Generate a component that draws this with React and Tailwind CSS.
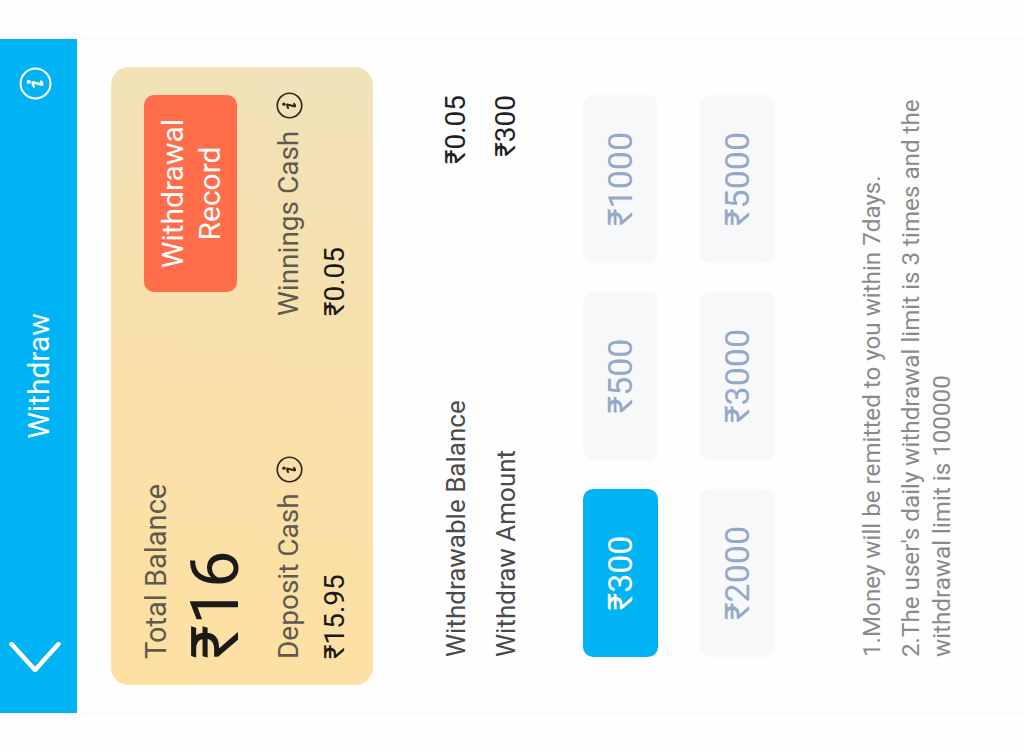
const Info = ({ size, color, sw = 2 }) => (
  <svg width={size} height={size} viewBox="0 0 32 32" fill="none" className="shrink-0">
    <circle cx="16" cy="16" r="14.5" stroke={color} strokeWidth={sw} />
    <circle cx="17.6" cy="9.4" r="2" fill={color} />
    <path d="M13 14.4c1.2-.9 2.4-1.3 4.2-1.2L15 21.6c-.3 1.2.4 1.6 2.9-.1" stroke={color} strokeWidth="2.4" strokeLinecap="round" strokeLinejoin="round" />
  </svg>
);

const amounts = ["₹300", "₹500", "₹1000", "₹2000", "₹3000", "₹5000"];

export default function App() {
  return (
    <div className="w-[1024px] h-[752px] overflow-hidden bg-[#fefefe] font-['Roboto',sans-serif]">
      <div className="w-[752px] h-[1024px] origin-top-left [transform:translateY(752px)_rotate(-90deg)] px-[38px]">
        <div className="h-full border-x border-[#f5f5f5] flex flex-col">
          <header className="h-[77px] shrink-0 bg-[#00b3f4] grid grid-cols-[1fr_auto_1fr] items-center text-white">
            <div className="pl-[41px] pb-[7px] flex">
              <svg width="30" height="52" viewBox="0 0 30 52" fill="none">
                <path d="M28 2.5 2 26l26 23.5" stroke="#fff" strokeWidth="4.5" strokeLinecap="round" strokeLinejoin="round" />
              </svg>
            </div>
            <h1 className="text-[30px] leading-none font-normal">Withdraw</h1>
            <div className="flex justify-end pr-[28px] pb-[6px]">
              <Info size={33} color="#fff" />
            </div>
          </header>

          <main className="px-[28px] pt-[34px]">
            <section className="h-[262px] rounded-[18px] bg-linear-100 from-[#fde0a2] via-[#f9e0aa] to-[#f0e2ba] pl-[26px] pr-[28px] pt-[33px] flex flex-col">
              <div className="flex justify-between h-[93px]">
                <div>
                  <div className="text-[29px] leading-[25px] text-[#5f5a4e]">Total Balance</div>
                  <div className="text-[66px] leading-[68px] mt-[13px] text-[#1c1a16]">₹16</div>
                </div>
                <button className="w-[197px] h-[93px] rounded-[10px] bg-[#ff6d4a] text-white text-[30px] leading-[37px]">
                  Withdrawal
                  <br />
                  Record
                </button>
              </div>
              <div className="grid grid-cols-[343px_1fr] mt-[36px]">
                <div>
                  <div className="flex items-center gap-[10px] h-[32px] text-[28px] whitespace-nowrap text-[#5f5a4e]">
                    Deposit Cash <Info size={27} color="#2a2823" />
                  </div>
                  <div className="text-[28px] leading-[32px] mt-[14px] text-[#1c1a16]">₹15.95</div>
                </div>
                <div>
                  <div className="flex items-center gap-[12px] h-[32px] text-[28px] whitespace-nowrap text-[#5f5a4e]">
                    Winnings Cash <Info size={27} color="#2a2823" />
                  </div>
                  <div className="text-[28px] leading-[32px] mt-[14px] text-[#1c1a16]">₹0.05</div>
                </div>
              </div>
            </section>

            <div className="px-[28px]">
              <div className="mt-[58px] text-[26px] leading-[50px] text-[#4a4a4a]">
                <div className="flex justify-between">
                  <span>Withdrawable Balance</span>
                  <span className="text-[#222] text-[28px]">₹0.05</span>
                </div>
                <div className="flex justify-between">
                  <span>Withdraw Amount</span>
                  <span className="text-[#222] text-[28px]">₹300</span>
                </div>
              </div>

              <div className="mt-[52px] grid grid-cols-3 gap-x-[29px] gap-y-[42px]">
                {amounts.map((a, i) => (
                  <button
                    key={a}
                    className={
                      i === 0
                        ? "h-[75px] rounded-[10px] bg-[#00b3f4] text-white text-[34px]"
                        : "h-[75px] rounded-[10px] bg-[#f7f8fa] text-[#94a8c8] text-[34px]"
                    }
                  >
                    {a}
                  </button>
                ))}
              </div>

              <div className="mt-[82px] text-[24.2px] leading-[31px] text-[#8a8a8a] whitespace-nowrap">
                <p>1.Money will be remitted to you within 7days.</p>
                <p className="mt-[8px]">
                  2.The user's daily withdrawal limit is 3 times and the
                  <br />
                  withdrawal limit is 100000
                </p>
              </div>
            </div>
          </main>
        </div>
      </div>
    </div>
  );
}
